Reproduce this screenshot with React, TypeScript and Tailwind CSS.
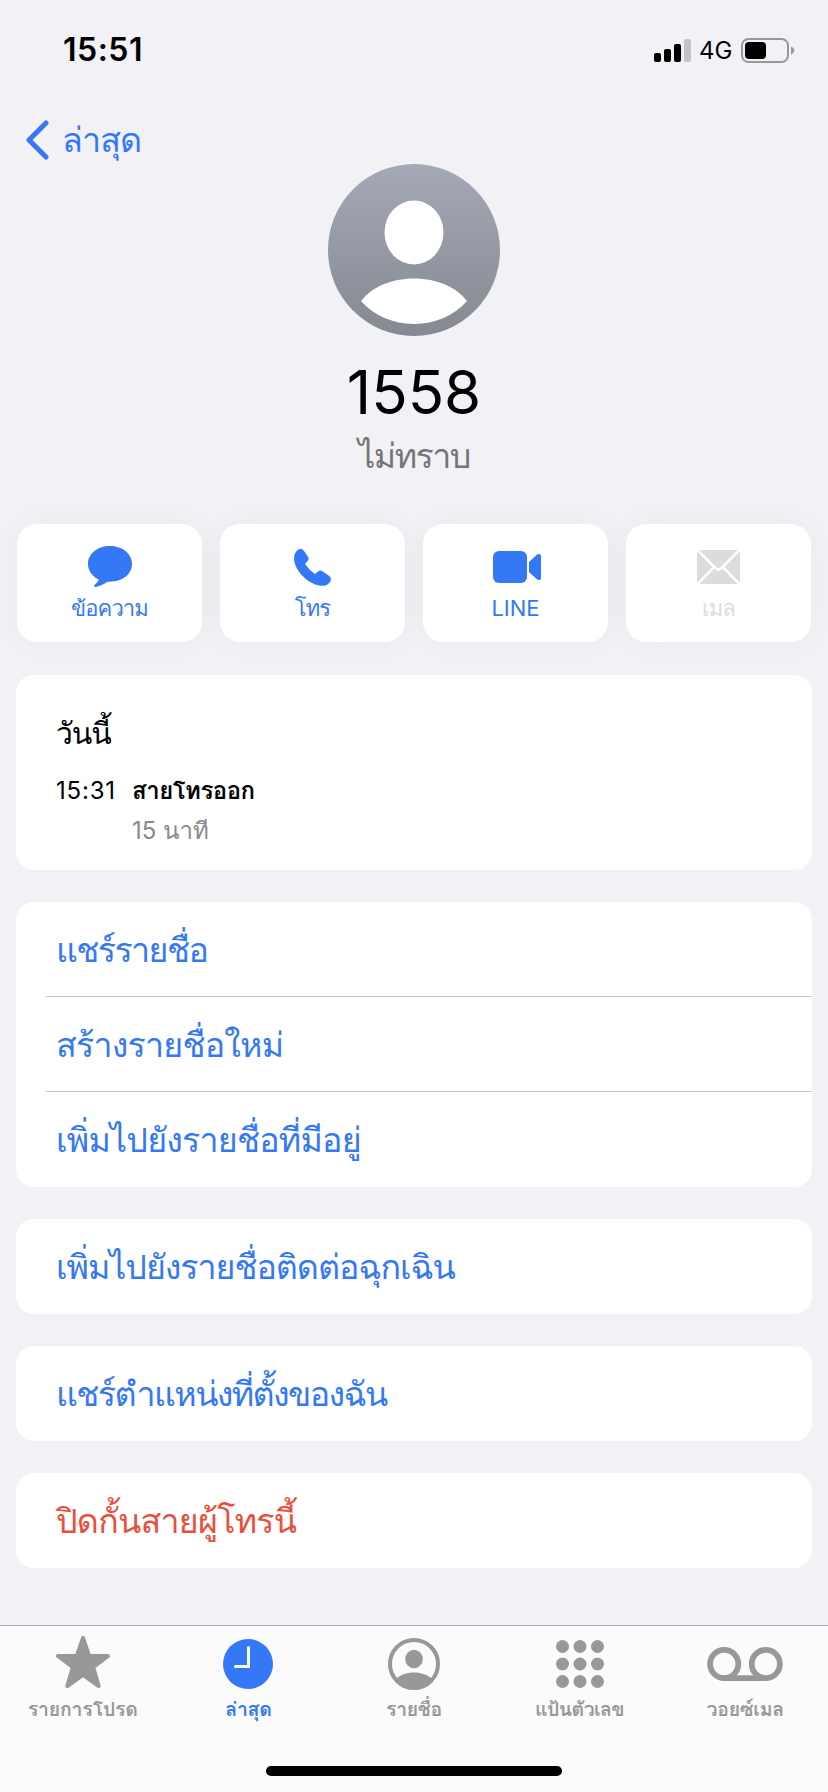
import type { ReactNode } from 'react';

type ActionItem = { label: string; icon: ReactNode; disabled?: boolean; tracking?: string };
type Row = { label: string; tracking: string };
type Tab = { label: string; icon: ReactNode; active?: boolean; tracking: string };

function MessageIcon() {
  return (
    <svg width="44" height="42" viewBox="0 0 44 42" fill="currentColor">
      <path d="M22 0C9.600 0 0 7.700 0 18c0 6.200 3.600 11.900 10.300 15.300.4.200.4.600.200 1-.8 1.700-2.400 3.300-3.800 4.700-1.300 1.200-.7 2.200.8 2 4-.5 8.400-3 12.200-5.300.8-.1 1.600 0 2.300 0C34.400 35.700 44 28.200 44 18S34.400 0 22 0Z" />
    </svg>
  );
}

function PhoneIcon() {
  return (
    <svg width="37" height="37" viewBox="0 0 37 37" fill="currentColor">
      <path d="M0 9.600C0 4.400 3 .8 5.200.2 7-.4 8.600.1 9.700 1.600l4.200 6.100c1.200 1.700.9 3.300-.6 4.800l-1.600 1.600c-.5.500-.5 1-.1 1.600.8 1.300 2.500 3.300 4 4.700 1.500 1.500 3.400 3.200 4.900 4 .6.400 1.100.3 1.600-.2l1.500-1.500c1.500-1.400 3.100-1.700 4.800-.5l6.200 4.300c1.500 1.100 2.700 2.600 2.100 4.900-.7 2.600-4 5.400-8.800 5.400C15.200 36.800 0 21.200 0 9.600Z" />
    </svg>
  );
}

function VideoIcon() {
  return (
    <svg className="ml-[3px]" width="48" height="32" viewBox="0 0 48 32" fill="currentColor">
      <rect width="34" height="32" rx="6" />
      <path d="M36 11 43.600 3.900C45.500 2.200 48 2.600 48 5.500v21c0 2.900-2.500 3.300-4.400 1.600L36 21Z" />
    </svg>
  );
}

function MailIcon() {
  return (
    <svg width="43" height="34" viewBox="0 0 43 34">
      <rect width="43" height="34" rx="3" fill="currentColor" />
      <path
        d="M0-.5 18 17.700c2.400 2.500 4.600 2.500 7 0L43-.5M0 34.500l16.300-16.700M43 34.500 26.700 17.800"
        fill="none"
        stroke="#fff"
        strokeWidth="2.600"
      />
    </svg>
  );
}

function StarIcon() {
  return (
    <svg className="-mt-1" width="54" height="52" viewBox="0 0 54 52" fill="currentColor">
      <path
        d="M27 2 33.200 20H52L37.200 31.200 42.700 50 27 38.900 11.300 50l5.500-18.800L2 20h18.800Z"
        stroke="currentColor"
        strokeWidth="4"
        strokeLinejoin="round"
      />
    </svg>
  );
}

function ClockIcon() {
  return (
    <svg width="50" height="50" viewBox="0 0 50 50">
      <circle cx="25" cy="25" r="25" fill="currentColor" />
      <path d="M25.500 8.500v19H12.500" fill="none" stroke="#fff" strokeWidth="3" strokeLinecap="round" />
    </svg>
  );
}

function ContactIcon() {
  return (
    <svg width="52" height="52" viewBox="0 0 52 52" fill="currentColor">
      <circle cx="26" cy="26" r="24" fill="none" stroke="currentColor" strokeWidth="4" />
      <ellipse cx="26" cy="21" rx="8.800" ry="9.300" />
      <path d="M8 41c4.200-4.300 10.500-6.600 18-6.600S39.800 36.700 44 41c-4 6-10.500 9.800-18 9.800S12 47 8 41Z" />
    </svg>
  );
}

function KeypadIcon() {
  return (
    <svg width="48" height="48" viewBox="0 0 48 48" fill="currentColor">
      {[6.5, 24, 41.5].map((y) => [6.5, 24, 41.5].map((x) => <circle key={`${x}-${y}`} cx={x} cy={y} r="6.500" />))}
    </svg>
  );
}

function VoicemailIcon() {
  return (
    <svg width="76" height="34" viewBox="0 0 76 34" fill="none" stroke="currentColor" strokeWidth="5.800">
      <circle cx="17.200" cy="17" r="14.100" />
      <circle cx="58.800" cy="17" r="14.100" />
      <path d="M17.200 31.100h41.600" />
    </svg>
  );
}

const actions: ActionItem[] = [
  { label: 'ข้อความ', icon: <MessageIcon />, tracking: 'tracking-[-0.9px]' },
  { label: 'โทร', icon: <PhoneIcon />, tracking: 'tracking-[-0.8px]' },
  { label: 'LINE', icon: <VideoIcon /> },
  { label: 'เมล', icon: <MailIcon />, disabled: true, tracking: 'tracking-[-0.8px]' },
];

const contactRows: Row[] = [
  { label: 'แชร์รายชื่อ', tracking: 'tracking-[-1.6px]' },
  { label: 'สร้างรายชื่อใหม่', tracking: 'tracking-[-0.8px]' },
  { label: 'เพิ่มไปยังรายชื่อที่มีอยู่', tracking: 'tracking-[-0.8px]' },
];

const tabs: Tab[] = [
  { label: 'รายการโปรด', icon: <StarIcon />, tracking: 'tracking-[-0.2px]' },
  { label: 'ล่าสุด', icon: <ClockIcon />, active: true, tracking: 'tracking-[-0.3px]' },
  { label: 'รายชื่อ', icon: <ContactIcon />, tracking: 'tracking-[-0.4px]' },
  { label: 'แป้นตัวเลข', icon: <KeypadIcon />, tracking: 'tracking-[-0.6px]' },
  { label: 'วอยซ์เมล', icon: <VoicemailIcon />, tracking: 'tracking-[-0.3px]' },
];

function StatusBar() {
  return (
    <header className="flex h-[100px] items-center justify-between pr-[33px] pl-[63px]">
      <span className="text-[32px] leading-none font-semibold tracking-[0.5px]">15:51</span>
      <div className="flex items-center">
        <svg width="37" height="23" viewBox="0 0 37 23">
          <rect y="14" width="7" height="9" rx="2" />
          <rect x="10" y="10" width="7" height="13" rx="2" />
          <rect x="20" y="5" width="7" height="18" rx="2" />
          <rect x="30" width="7" height="23" rx="2" fill="#c2c2c7" />
        </svg>
        <span className="mt-0.5 ml-2 w-[34px] text-[24px] leading-none">4G</span>
        <svg className="ml-2" width="54" height="25" viewBox="0 0 54 25">
          <rect x="1" y="1" width="46" height="23" rx="6.500" fill="none" stroke="#98989b" strokeWidth="2" />
          <rect x="4" y="4" width="21" height="17" rx="4" />
          <path d="M50 8.500c2 .8 3.300 2.300 3.300 4s-1.300 3.200-3.300 4Z" fill="#98989b" />
        </svg>
      </div>
    </header>
  );
}

function Avatar() {
  return (
    <svg width="172" height="172" viewBox="0 0 172 172">
      <defs>
        <linearGradient id="avatar" x1="0" y1="0" x2="0" y2="1">
          <stop stopColor="#a5a9b6" />
          <stop offset="1" stopColor="#858991" />
        </linearGradient>
      </defs>
      <circle cx="86" cy="86" r="86" fill="url(#avatar)" />
      <ellipse cx="86" cy="68.500" rx="29.500" ry="32" fill="#fff" />
      <path d="M33 137c11-14 30-22.500 53-22.500s42 8.500 53 22.500c-13 14.500-32 23-53 23s-40-8.500-53-23Z" fill="#fff" />
    </svg>
  );
}

function ActionButton({ item }: { item: ActionItem }) {
  return (
    <button
      type="button"
      className={`flex h-[118px] flex-col items-center rounded-[20px] bg-white pt-5 shadow-[0_0_30px_rgba(0,0,0,0.045)] ${
        item.disabled ? 'text-[#dcdcdc]' : 'text-[#3478f6]'
      }`}
    >
      <span className="flex h-[46px] items-center">{item.icon}</span>
      <span className={`text-[22px] leading-9 whitespace-nowrap ${item.tracking ?? ''}`}>{item.label}</span>
    </button>
  );
}

function ActionRow({ label, tracking, danger }: Row & { danger?: boolean }) {
  return (
    <button
      type="button"
      className={`flex h-[95px] w-full items-center pl-10 text-left text-[34px] leading-[50px] whitespace-nowrap ${tracking} ${
        danger ? 'text-[#eb4e3d]' : 'text-[#3478f6]'
      }`}
    >
      {label}
    </button>
  );
}

export default function App() {
  return (
    <div className="flex h-[1792px] w-[828px] flex-col overflow-hidden bg-[#f1f1f6] font-['Inter','Loma',sans-serif] text-black">
      <StatusBar />

      <nav className="flex h-16 items-center pt-[16px] pl-[25px] text-[#3478f6]">
        <svg width="24" height="40" viewBox="0 0 24 40" fill="none">
          <path d="M21 3 4 20l17 17" stroke="currentColor" strokeWidth="5" strokeLinecap="round" strokeLinejoin="round" />
        </svg>
        <span className="ml-[13px] text-[34px] leading-[48px] tracking-[-0.9px]">ล่าสุด</span>
      </nav>

      <section className="flex h-[360px] flex-col items-center">
        <Avatar />
        <h1 className="mt-[26px] text-[60px] leading-[60px]">1558</h1>
        <p className="mt-[9px] text-[34px] leading-[50px] tracking-[-1.6px] text-[#757578]">ไม่ทราบ</p>
      </section>

      <div className="grid grid-cols-4 gap-[18px] px-[17px]">
        {actions.map((a) => (
          <ActionButton key={a.label} item={a} />
        ))}
      </div>

      <main className="mt-[33px] flex flex-col gap-8 px-4">
        <section className="h-[195px] rounded-[18px] bg-white pt-9 pl-10">
          <h2 className="text-[30px] leading-[44px] tracking-[-1px]">วันนี้</h2>
          <div className="mt-4 flex text-[24px] leading-10">
            <span className="w-[76px] tracking-[0.8px]">15:31</span>
            <div>
              <p className="font-bold tracking-[-0.5px]">สายโทรออก</p>
              <p className="text-[#8a8a8d]">15 นาที</p>
            </div>
          </div>
        </section>

        <section className="rounded-[18px] bg-white">
          {contactRows.map((r, i) => (
            <div key={r.label}>
              {i > 0 && <div className="-mt-px ml-[30px] h-px bg-[#c6c6c8]" />}
              <ActionRow {...r} />
            </div>
          ))}
        </section>

        <section className="rounded-[18px] bg-white">
          <ActionRow label="เพิ่มไปยังรายชื่อติดต่อฉุกเฉิน" tracking="tracking-[-1.05px]" />
        </section>
        <section className="rounded-[18px] bg-white">
          <ActionRow label="แชร์ตำแหน่งที่ตั้งของฉัน" tracking="tracking-[-1.6px]" />
        </section>
        <section className="rounded-[18px] bg-white">
          <ActionRow label="ปิดกั้นสายผู้โทรนี้" tracking="tracking-[-0.75px]" danger />
        </section>
      </main>

      <footer className="mt-auto flex h-[167px] flex-col items-center border-t border-[#a9a9ad] bg-[#fbfbfb]">
        <div className="grid w-full grid-cols-5">
          {tabs.map((t) => (
            <button
              key={t.label}
              type="button"
              className={`flex flex-col items-center pt-2.5 ${t.active ? 'text-[#3478f6]' : 'text-[#989899]'}`}
            >
              <span className="flex h-14 items-center">{t.icon}</span>
              <span className={`text-[19.500px] leading-[34px] font-semibold whitespace-nowrap ${t.tracking}`}>
                {t.label}
              </span>
            </button>
          ))}
        </div>
        <div className="mt-auto mb-4 h-2.5 w-[296px] rounded-full bg-black" />
      </footer>
    </div>
  );
}
